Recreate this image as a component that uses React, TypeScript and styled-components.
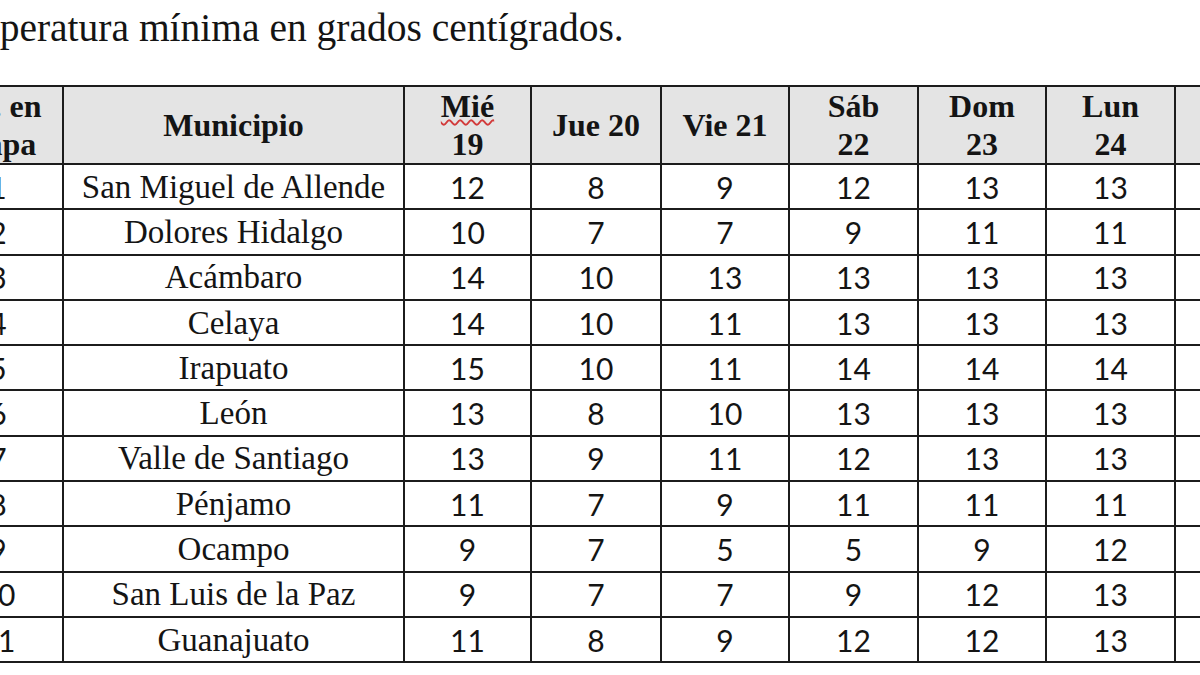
import styled, { createGlobalStyle } from 'styled-components';

const GlobalStyle = createGlobalStyle`
  html, body {
    margin: 0;
    padding: 0;
    background: #ffffff;
    overflow: hidden;
  }
  body {
    width: 1200px;
    height: 675px;
  }
`;

type Row = { id: number; name: string; temps: number[] };

const rows: Row[] = [
  { id: 1, name: 'San Miguel de Allende', temps: [12, 8, 9, 12, 13, 13] },
  { id: 2, name: 'Dolores Hidalgo', temps: [10, 7, 7, 9, 11, 11] },
  { id: 3, name: 'Acámbaro', temps: [14, 10, 13, 13, 13, 13] },
  { id: 4, name: 'Celaya', temps: [14, 10, 11, 13, 13, 13] },
  { id: 5, name: 'Irapuato', temps: [15, 10, 11, 14, 14, 14] },
  { id: 6, name: 'León', temps: [13, 8, 10, 13, 13, 13] },
  { id: 7, name: 'Valle de Santiago', temps: [13, 9, 11, 12, 13, 13] },
  { id: 8, name: 'Pénjamo', temps: [11, 7, 9, 11, 11, 11] },
  { id: 9, name: 'Ocampo', temps: [9, 7, 5, 5, 9, 12] },
  { id: 10, name: 'San Luis de la Paz', temps: [9, 7, 7, 9, 12, 13] },
  { id: 11, name: 'Guanajuato', temps: [11, 8, 9, 12, 12, 13] },
];

const colWidths = [130, 341, 127, 130, 128, 129, 128, 129, 120];

export default function App() {
  return (
    <Page>
      <GlobalStyle />
      <Title>Temperatura mínima en grados centígrados.</Title>
      <Table>
        <colgroup>
          {colWidths.map((w, i) => (
            <Col key={i} $w={w} />
          ))}
        </colgroup>
        <thead>
          <tr>
            <HeadCell>No. en<br />mapa</HeadCell>
            <HeadCell>Municipio</HeadCell>
            <HeadCell><Squiggle>Mié</Squiggle><br />19</HeadCell>
            <HeadCell>Jue 20</HeadCell>
            <HeadCell>Vie 21</HeadCell>
            <HeadCell>Sáb<br />22</HeadCell>
            <HeadCell>Dom<br />23</HeadCell>
            <HeadCell>Lun<br />24</HeadCell>
            <HeadCell>Mar<br />25</HeadCell>
          </tr>
        </thead>
        <tbody>
          {rows.map((r) => (
            <BodyRow key={r.id}>
              <NumCell>{r.id}</NumCell>
              <NameCell>{r.name}</NameCell>
              {r.temps.map((t, i) => (
                <NumCell key={i}>{t}</NumCell>
              ))}
              <NumCell />
            </BodyRow>
          ))}
        </tbody>
      </Table>
    </Page>
  );
}

const Page = styled.div`
  width: 1200px;
  height: 675px;
  overflow: hidden;
  background: #ffffff;
  color: #141414;
`;

const Title = styled.p`
  margin: 6px 0 34px -70px;
  font-family: 'Liberation Serif', 'Times New Roman', serif;
  font-size: 39.5px;
  line-height: 45px;
  white-space: nowrap;
`;

const Table = styled.table`
  margin-left: -68px;
  width: 1362px;
  table-layout: fixed;
  border-collapse: collapse;
`;

const Col = styled.col<{ $w: number }>`
  width: ${({ $w }) => $w}px;
`;

const HeadCell = styled.th`
  height: 73px;
  padding: 0;
  border: 2px solid #1c1c1c;
  background: #e4e4e4;
  font-family: 'Liberation Serif', 'Times New Roman', serif;
  font-size: 32px;
  font-weight: 700;
  line-height: 38px;
  text-align: center;
  vertical-align: middle;
  white-space: nowrap;
`;

const Squiggle = styled.span`
  text-decoration: underline wavy #d23a3a;
  text-decoration-thickness: 1.5px;
  text-underline-offset: 2px;
`;

const BodyRow = styled.tr`
  height: 45.3px;
`;

const NameCell = styled.td`
  padding: 0;
  border: 2px solid #1c1c1c;
  font-family: 'Liberation Serif', 'Times New Roman', serif;
  font-size: 33px;
  line-height: 40px;
  text-align: center;
  vertical-align: middle;
  white-space: nowrap;
`;

const NumCell = styled.td`
  padding: 0;
  border: 2px solid #1c1c1c;
  font-family: Lato, 'Liberation Sans', sans-serif;
  font-size: 30px;
  line-height: 40px;
  text-align: center;
  vertical-align: middle;
  white-space: nowrap;
`;
